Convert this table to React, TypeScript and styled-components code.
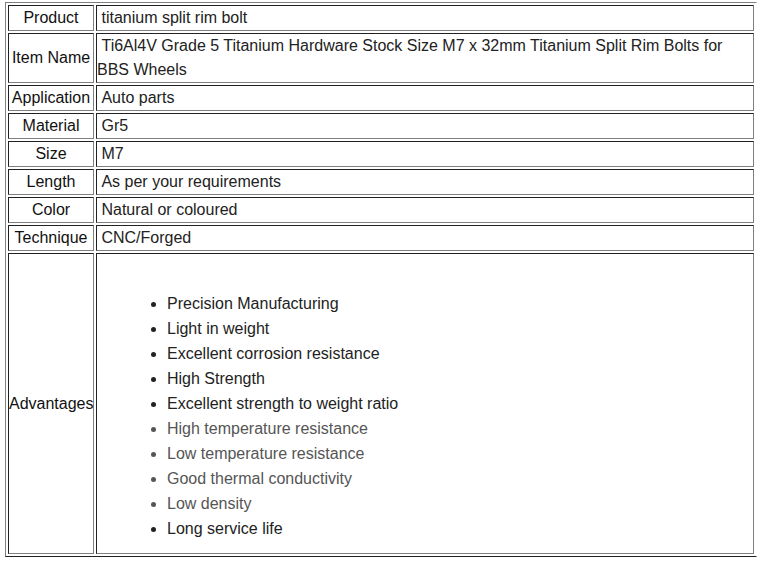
import React from "react";
import styled, { createGlobalStyle } from "styled-components";

const Global = createGlobalStyle`
  html, body { margin: 0; padding: 0; background: #fff; }
  body { padding: 2px 0 0 5px; font-family: "Liberation Sans", Arial, sans-serif; }
`;

const Table = styled.table`
  width: 752px;
  border-collapse: separate;
  border-spacing: 2px;
  table-layout: fixed;
  border-style: solid;
  border-width: 1px;
  border-color: #808080 transparent #222 #808080;
  font-family: "Liberation Sans", Arial, sans-serif;
  font-size: 16px;
  line-height: 24px;
  color: #333;
`;

const Cell = styled.td`
  border-style: solid;
  border-width: 1px;
  border-color: #222 #808080 #808080 #222;
  padding: 0;
  vertical-align: middle;
`;

const Label = styled(Cell)`
  width: 84px;
  text-align: center;
  color: #111;
`;

const Value = styled(Cell)`
  text-align: left;
  color: #222;
`;

const List = styled.ul`
  margin: 37px 0 12px 30px;
  padding-left: 40px;
  list-style: disc;
`;

const Item = styled.li<{ $muted?: boolean }>`
  line-height: 25px;
  color: ${(p) => (p.$muted ? "#555" : "#222")};
`;

const rows: [string, string][] = [
  ["Product", "titanium split rim bolt"],
  [
    "Item Name",
    "Ti6Al4V Grade 5 Titanium Hardware Stock Size M7 x 32mm Titanium Split Rim Bolts for BBS Wheels",
  ],
  ["Application", "Auto parts"],
  ["Material", "Gr5"],
  ["Size", "M7"],
  ["Length", "As per your requirements"],
  ["Color", "Natural or coloured"],
  ["Technique", "CNC/Forged"],
];

const advantages: [string, boolean][] = [
  ["Precision Manufacturing", false],
  ["Light in weight", false],
  ["Excellent corrosion resistance", false],
  ["High Strength", false],
  ["Excellent strength to weight ratio", false],
  ["High temperature resistance", true],
  ["Low temperature resistance", true],
  ["Good thermal conductivity", true],
  ["Low density", true],
  ["Long service life", false],
];

export default function App() {
  return (
    <>
      <Global />
      <Table>
        <tbody>
          {rows.map(([k, v]) => (
            <tr key={k}>
              <Label>{k}</Label>
              <Value>{"\u00a0" + v}</Value>
            </tr>
          ))}
          <tr>
            <Label>Advantages</Label>
            <Value>
              <List>
                {advantages.map(([t, m]) => (
                  <Item key={t} $muted={m}>
                    {t}
                  </Item>
                ))}
              </List>
            </Value>
          </tr>
        </tbody>
      </Table>
    </>
  );
}
